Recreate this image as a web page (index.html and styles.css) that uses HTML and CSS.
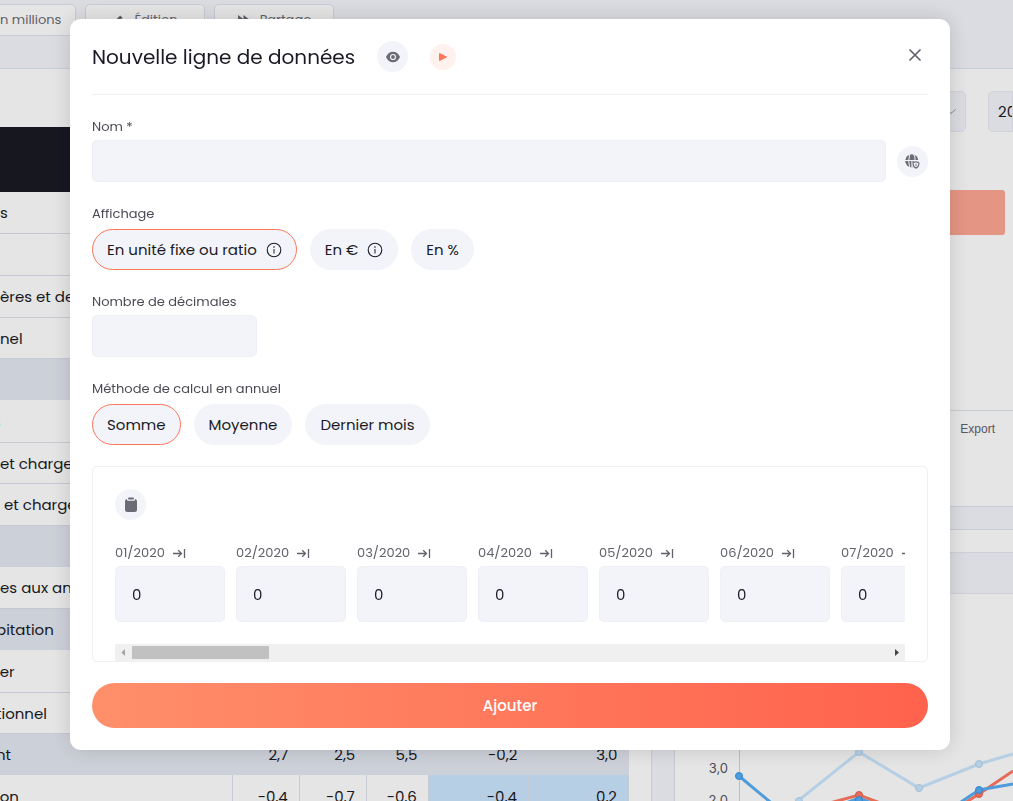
FILE: index.html
```html
<!DOCTYPE html>
<html lang="fr">
<head>
<meta charset="utf-8">
<meta name="viewport" content="width=device-width, initial-scale=1">
<title>Nouvelle ligne de données</title>
<link rel="stylesheet" href="styles.css">
</head>
<body>
<svg class="sprite" aria-hidden="true">
  <symbol id="info" viewBox="0 0 16 16"><circle cx="8" cy="8" r="6.800" fill="none" stroke="currentColor" stroke-width="1.100"/><path d="M8 7v4.500" stroke="currentColor" stroke-width="1"/><circle cx="8" cy="5" r=".8" fill="currentColor"/></symbol>
  <symbol id="fill-right" viewBox="0 0 14 12"><path d="M1 6.500h8.500M6.200 3.200l3.300 3.300-3.300 3.300M12.500 2v9" fill="none" stroke="currentColor" stroke-width="1.300"/></symbol>
</svg>

<div class="app" aria-hidden="true">
  <header class="toolbar">
    <button class="tool tool-first" type="button">n millions</button>
    <button class="tool" type="button"><svg width="12" height="12" viewBox="0 0 12 12"><path d="M1 11l.8-3.200 6.400-6.400 2.400 2.400-6.400 6.400z" fill="currentColor"/></svg>Édition</button>
    <button class="tool" type="button"><svg width="13" height="12" viewBox="0 0 13 12"><path d="M1 1l5.500 4V1L13 6l-6.500 5V7L1 11z" fill="currentColor"/></svg>Partage</button>
  </header>
  <div class="content">
    <section class="ledger">
      <table>
        <colgroup><col class="c-name"><col class="c-month"><col class="c-month"><col class="c-last"><col class="c-total"><col class="c-total"></colgroup>
        <thead><tr><th colspan="6"></th></tr></thead>
        <tbody>
          <tr><td colspan="6">s</td></tr>
          <tr><td colspan="6"></td></tr>
          <tr><td colspan="6">ères et de</td></tr>
          <tr><td colspan="6">nel</td></tr>
          <tr class="sum"><td colspan="6"></td></tr>
          <tr><td class="accent" colspan="6">s</td></tr>
          <tr><td colspan="6">et charges</td></tr>
          <tr><td colspan="6">&nbsp;et charges</td></tr>
          <tr class="sum"><td colspan="6"></td></tr>
          <tr><td colspan="6">es aux an</td></tr>
          <tr class="sum"><td class="cut" colspan="6">bitation</td></tr>
          <tr><td class="cut" colspan="6">ier</td></tr>
          <tr><td class="cut" colspan="6">tionnel</td></tr>
          <tr class="sum"><td class="cut">nt</td><td>2,7</td><td>2,5</td><td>5,5</td><td>-0,2</td><td>3,0</td></tr>
          <tr class="split"><td class="cut">ion</td><td>-0,4</td><td>-0,7</td><td>-0,6</td><td class="blue">-0,4</td><td class="blue">0,2</td></tr>
        </tbody>
      </table>
    </section>
    <section class="side">
      <div class="filters">
        <div class="selects"><button class="pick pick-first" type="button"><svg width="8" height="6" viewBox="0 0 8 6"><path d="M.5 1.500l2.500 3 4.500-4" fill="none" stroke="#999"/></svg></button><button class="pick" type="button">2020</button></div>
        <div class="banner"></div>
      </div>
      <div class="export">Export</div>
      <div class="band"></div>
      <div class="chart-head"></div>
      <svg class="chart" width="338" height="207" viewBox="675 594 338 207">
        <path d="M739.500 594v207" stroke="#d4d4d8"/>
        <text x="728" y="773" text-anchor="end">3,0</text><text x="728" y="805" text-anchor="end">2,0</text>
        <g fill="none" stroke-width="3">
          <path d="M796 804l3-4 60-48 60 36 60-24 34-10" stroke="#cce7ff"/>
          <path d="M826 804l33-9 24 9M960 806l19-12 34-23" stroke="#ff7a63"/>
          <path d="M739 776l36 30M838 806l21-8 20 8M955 806l24-16 34-6" stroke="#58aef5"/>
        </g>
        <g fill="#cce7ff" stroke="#b4d6f2"><circle cx="799" cy="801" r="3.500"/><circle cx="859" cy="752" r="3.500"/><circle cx="919" cy="788" r="3.500"/><circle cx="979" cy="764" r="3.500"/></g>
        <g fill="#ff7a63" stroke="#e8604a"><circle cx="859" cy="795" r="3.500"/><circle cx="979" cy="794" r="3.500"/></g>
        <g fill="#58aef5" stroke="#3595e6"><circle cx="739" cy="776" r="3.500"/><circle cx="859" cy="800" r="3.500"/><circle cx="979" cy="790" r="3.500"/></g>
      </svg>
    </section>
  </div>
</div>

<div class="overlay">
  <form class="modal" role="dialog" aria-labelledby="title">
    <div class="modal-head">
      <h1 id="title">Nouvelle ligne de données</h1>
      <button class="round" type="button" aria-label="Afficher"><svg width="14" height="12" viewBox="0 0 14 12"><path d="M0 6C1.500 2.500 4 .7 7 .7S12.500 2.500 14 6c-1.500 3.500-4 5.300-7 5.300S1.500 9.500 0 6z" fill="#6b6b75"/><circle cx="7" cy="6" r="2.500" fill="none" stroke="#f3f4fa" stroke-width="1.200"/></svg></button>
      <button class="round play" type="button" aria-label="Lecture"><svg width="8" height="8" viewBox="0 0 8 8"><path d="M.5.5v7L7.500 4z" fill="#ff7557" stroke="#ff7557" stroke-linejoin="round"/></svg></button>
      <button class="close" type="button" aria-label="Fermer"><svg width="14" height="14" viewBox="0 0 14 14"><path d="M1.500 1.500l11 11M12.500 1.500l-11 11" stroke="#62626c" stroke-width="1.700"/></svg></button>
    </div>

    <div class="field">
      <label for="nom">Nom *</label>
      <div class="row">
        <input class="box grow" id="nom" type="text">
        <button class="round" type="button" aria-label="Traductions"><svg width="15" height="15" viewBox="0 0 15 15"><circle cx="6.800" cy="6.800" r="6.600" fill="#6b6b75"/><path d="M0 6.500h14M4.900 0Q2.400 6.800 4.900 14M8.700 0q1.600 3 1.400 7M6.900 6.500v8" fill="none" stroke="#f3f4fa" stroke-width="1"/><circle cx="11" cy="10.800" r="3.900" fill="#f3f4fa"/><path d="M11 7.800 13.800 8.800v1.800c0 1.600-1.300 2.700-2.800 3.500-1.500-.8-2.800-1.900-2.800-3.500V8.800z" fill="none" stroke="#6b6b75" stroke-width="1.200"/><path d="M11 9.800v2" stroke="#6b6b75"/></svg></button>
      </div>
    </div>

    <fieldset class="field">
      <legend>Affichage</legend>
      <div class="pills">
        <label class="pill"><input type="radio" name="affichage" checked>En unité fixe ou ratio<svg width="16" height="16"><use href="#info"/></svg></label>
        <label class="pill"><input type="radio" name="affichage">En €<svg width="16" height="16"><use href="#info"/></svg></label>
        <label class="pill"><input type="radio" name="affichage">En %</label>
      </div>
    </fieldset>

    <div class="field">
      <label for="decimales">Nombre de décimales</label>
      <input class="box short" id="decimales" type="text">
    </div>

    <fieldset class="field">
      <legend>Méthode de calcul en annuel</legend>
      <div class="pills">
        <label class="pill"><input type="radio" name="methode" checked>Somme</label>
        <label class="pill"><input type="radio" name="methode">Moyenne</label>
        <label class="pill"><input type="radio" name="methode">Dernier mois</label>
      </div>
    </fieldset>

    <div class="panel">
      <button class="round" type="button" aria-label="Coller"><svg width="12" height="15" viewBox="0 0 12 15"><rect y="2" width="12" height="13" rx="2.500" fill="#6b6b75"/><path d="M2 1.500v1.200q0 1 1 1h6q1 0 1-1V1.500" fill="#f3f4fa"/><rect x="3" y=".5" width="6" height="2" rx="1" fill="#6b6b75"/></svg></button>
      <div class="months">
        <div class="month"><div class="month-head"><label for="m1">01/2020</label><svg width="14" height="12"><use href="#fill-right"/></svg></div><input class="box" id="m1" value="0"></div>
        <div class="month"><div class="month-head"><label for="m2">02/2020</label><svg width="14" height="12"><use href="#fill-right"/></svg></div><input class="box" id="m2" value="0"></div>
        <div class="month"><div class="month-head"><label for="m3">03/2020</label><svg width="14" height="12"><use href="#fill-right"/></svg></div><input class="box" id="m3" value="0"></div>
        <div class="month"><div class="month-head"><label for="m4">04/2020</label><svg width="14" height="12"><use href="#fill-right"/></svg></div><input class="box" id="m4" value="0"></div>
        <div class="month"><div class="month-head"><label for="m5">05/2020</label><svg width="14" height="12"><use href="#fill-right"/></svg></div><input class="box" id="m5" value="0"></div>
        <div class="month"><div class="month-head"><label for="m6">06/2020</label><svg width="14" height="12"><use href="#fill-right"/></svg></div><input class="box" id="m6" value="0"></div>
        <div class="month"><div class="month-head"><label for="m7">07/2020</label><svg width="14" height="12"><use href="#fill-right"/></svg></div><input class="box" id="m7" value="0"></div>
      </div>
      <div class="scroll">
        <svg width="17" height="17" viewBox="0 0 17 17"><path d="M10 5v7L6.500 8.500z" fill="#a3a3a3"/></svg>
        <div class="thumb"></div>
        <svg width="17" height="17" viewBox="0 0 17 17"><path d="M7 5v7l4-3.500z" fill="#454545"/></svg>
      </div>
    </div>

    <button class="submit" type="submit">Ajouter</button>
  </form>
</div>
</body>
</html>
```
FILE: styles.css
```css
* { box-sizing: border-box; }
body {
  margin: 0;
  height: 100vh;
  overflow: hidden;
  background: #fff;
  color: #1a1a24;
  font: 400 15px/20px Poppins, Inter, "Open Sans", sans-serif;
}
button, input { font: inherit; color: inherit; }
button { border: 0; padding: 0; }
svg { display: block; flex: none; }
.sprite { position: absolute; width: 0; height: 0; }

/* Page behind the dialog */
.app { height: 100vh; overflow: hidden; display: flex; flex-direction: column; }
.toolbar {
  flex: none;
  display: flex;
  align-items: flex-start;
  gap: 9px;
  height: 69px;
  padding-top: 4px;
  background: #f4f5fb;
  border-bottom: 1px solid #dde5ee;
}
.tool {
  display: flex;
  align-items: center;
  justify-content: center;
  gap: 10px;
  width: 120px;
  height: 32px;
  background: #fff;
  border: 1px solid #dde2ec;
  border-radius: 5px;
  color: #6b6b75;
  font-size: 13px;
}
.tool-first { width: 76px; border-left: 0; border-radius: 0 5px 5px 0; justify-content: flex-start; }
.content { flex: 1; display: flex; min-height: 0; }
.ledger { flex: none; width: 652px; padding-top: 58px; border-right: 1px solid #dde2ec; }
table { width: 629px; table-layout: fixed; border-collapse: collapse; }
.c-name { width: 232px; }
.c-month { width: 67px; }
.c-last { width: 62px; }
.c-total { width: 100px; }
th { height: 65px; padding: 0; background: #1a1a24; }
td { height: 42px; padding: 2px 11px 0 0; border-bottom: 1px solid #dde0ea; white-space: nowrap; text-align: right; }
tr:nth-child(3n+1) td { height: 41px; }
td:first-child { padding: 2px 0 0; text-align: left; }
.sum td { background: #e4e8f1; border: 0; }
.split td { border-right: 1px solid #dde2ec; }
.split .blue { background: #cce7ff; }
td.cut { text-indent: -4px; }
td.accent { color: #7fe3ee; text-indent: -7px; }
.side { flex: 1; min-width: 0; margin-left: 22px; border-left: 1px solid #dde2ec; box-shadow: -22px 0 #f4f5fb; }
.filters { height: 342px; padding-top: 22px; border-bottom: 1px solid #dde5ee; }
.selects { display: flex; justify-content: flex-end; gap: 22px; overflow: hidden; }
.pick { width: 25px; height: 41px; padding-left: 9px; background: #f4f5fb; border: 1px solid #e9eaf3; border-radius: 5px 0 0 5px; overflow: hidden; text-align: left; }
.pick-first { width: 120px; padding-right: 9px; border-radius: 5px; display: flex; align-items: center; justify-content: flex-end; }
.banner { height: 45px; margin: 58px 8px 0 80px; background: #ffa692; border-radius: 3px; }
.export { height: 95px; padding: 8px 18px 0 0; color: #62626c; font: 12px/20px "Liberation Sans", sans-serif; text-align: right; }
.band { height: 24px; margin-bottom: 22px; background: #f4f5fb; border: solid #dde5ee; border-width: 1px 0; }
.chart-head { height: 42px; background: #f4f5fb; border: solid #e6e8f2; border-width: 1px 0; }
.chart text { fill: #55555f; font: 13px Inter, sans-serif; }

/* Dialog */
.overlay {
  position: fixed;
  inset: 0;
  padding: 19px 63px 0 70px;
  background: rgba(0, 0, 0, .1);
}
.modal {
  display: flex;
  flex-direction: column;
  gap: 21px;
  padding: 0 22px 22px;
  background: #fff;
  border-radius: 11px;
  box-shadow: 0 0 22px rgba(0, 0, 0, .15);
}
.modal-head { display: flex; align-items: center; height: 76px; border-bottom: 1px solid #f0f0f3; }
h1 { margin: 0; font-size: 20px; font-weight: 400; line-height: 30px; }
.round { display: grid; place-items: center; flex: none; width: 31px; height: 31px; border-radius: 50%; background: #f3f4fa; }
.modal-head .round { margin-left: 22px; }
.modal-head .play { width: 26px; height: 26px; background: #fff1ee; }
.close { margin: 0 6px 4px auto; background: none; }
.field { min-width: 0; margin: 0; padding: 0; border: 0; }
.field > label, legend { display: block; padding: 0; margin-bottom: 2px; color: #4a4a54; font-size: 13px; line-height: 22px; }
fieldset.field legend { margin-bottom: 4px; }
.row { display: flex; align-items: center; gap: 11px; }
.box { display: block; height: 42px; padding: 0 16px; background: #f3f4fa; border: 1px solid #eff0f5; border-radius: 5px; outline: 0; }
.grow { flex: 1; min-width: 0; }
.short { width: 165px; }
.pills { display: flex; gap: 13px; }
.pill {
  position: relative;
  display: flex;
  align-items: center;
  gap: 9px;
  height: 41px;
  padding: 0 14px;
  background: #f3f4fa;
  border: 1px solid #f3f4fa;
  border-radius: 21px;
}
.pill:has(:checked) { border-color: #ff7557; }
.pill input { position: absolute; inset: 0; margin: 0; opacity: 0; }
.panel { padding: 22px 22px 0; border: 1px solid #f0f0f3; border-radius: 5px; }
.months { display: flex; gap: 11px; margin-top: 22px; overflow: hidden; }
.month { flex: none; width: 110px; }
.month-head { display: flex; align-items: center; gap: 7px; height: 22px; margin-bottom: 2px; color: #62626c; font-size: 13px; }
.month .box { width: 100%; height: 56px; }
.scroll { display: flex; align-items: center; height: 17px; margin-top: 22px; background: #f0f0f0; }
.thumb { width: 137px; height: 13px; margin-right: auto; background: #c1c1c1; }
.submit {
  height: 45px;
  border-radius: 23px;
  background: linear-gradient(90deg, #ff8f6b, #ff624d);
  color: #fff;
  font-weight: 500;
}
```
